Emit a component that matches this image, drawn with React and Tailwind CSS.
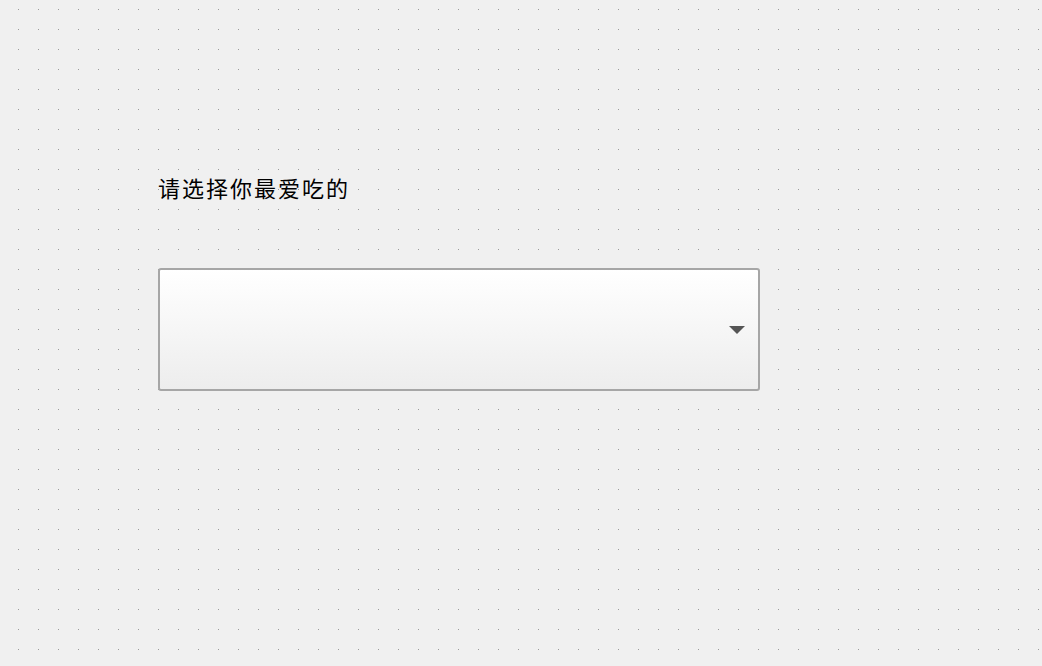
export default function App() {
  return (
    <div className="relative min-h-screen w-full bg-[#f0f0f0] font-['Noto_Sans_CJK_SC','Noto_Sans',sans-serif]">
      {/* Designer grid dots */}
      <svg className="absolute inset-0 h-full w-full" shapeRendering="crispEdges">
        <defs>
          <pattern id="dots" x="18" y="9" width="20" height="20" patternUnits="userSpaceOnUse">
            <rect x="0" y="0" width="1" height="1" fill="#9c9c9c" />
          </pattern>
        </defs>
        <rect width="100%" height="100%" fill="url(#dots)" />
      </svg>

      <div className="relative flex flex-col pl-[158px] pt-[174px]">
        {/* Label */}
        <p className="text-[22px] leading-[26px] tracking-[2px] text-black">请选择你最爱吃的</p>

        {/* Combo box */}
        <div className="mt-[68px] flex h-[123px] w-[602px] items-center justify-end rounded-[3px] border-2 border-[#a6a6a6] bg-gradient-to-b from-white to-[#ededed] pr-[13px]">
          <svg width="16" height="8" viewBox="0 0 16 8">
            <path d="M0 0H16L8 8Z" fill="#555555" />
          </svg>
        </div>
      </div>
    </div>
  );
}
